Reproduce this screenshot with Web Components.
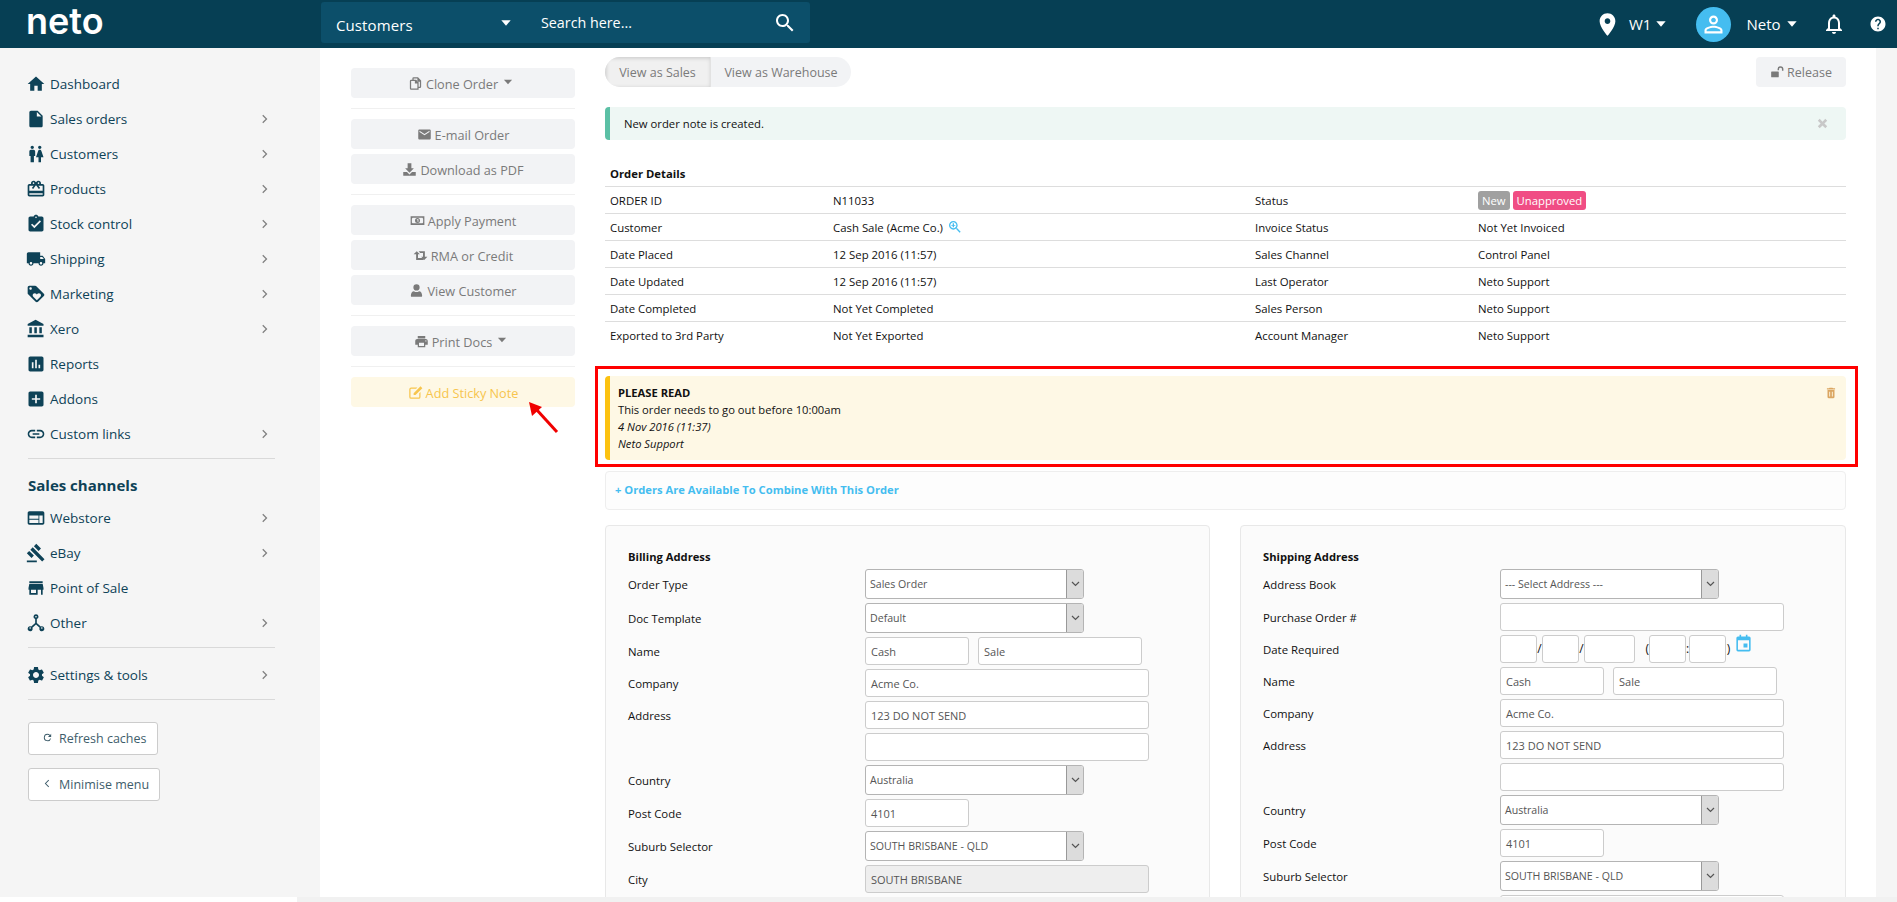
<!DOCTYPE html>
<html lang="en">
<head>
<meta charset="utf-8">
<title>Order N11033</title>
<style>
  html, body { margin: 0; height: 100%; overflow: hidden; background: #f5f5f5; }
  body { font-family: "Open Sans", "Liberation Sans", sans-serif; font-size: 12px; color: #111; }
</style>
</head>
<body>
<neto-app>
  <neto-topbar slot="top"></neto-topbar>

  <neto-sidebar slot="side">
    <nav-item icon="home">Dashboard</nav-item>
    <nav-item icon="file" more>Sales orders</nav-item>
    <nav-item icon="wc" more>Customers</nav-item>
    <nav-item icon="gift" more>Products</nav-item>
    <nav-item icon="task" more>Stock control</nav-item>
    <nav-item icon="truck" more>Shipping</nav-item>
    <nav-item icon="tag" more>Marketing</nav-item>
    <nav-item icon="bank" more>Xero</nav-item>
    <nav-item icon="chart">Reports</nav-item>
    <nav-item icon="addbox">Addons</nav-item>
    <nav-item icon="link" more>Custom links</nav-item>
    <side-rule></side-rule>
    <side-heading>Sales channels</side-heading>
    <nav-item icon="web" more>Webstore</nav-item>
    <nav-item icon="gavel" more>eBay</nav-item>
    <nav-item icon="store">Point of Sale</nav-item>
    <nav-item icon="hub" more>Other</nav-item>
    <side-rule></side-rule>
    <nav-item icon="cog" more>Settings &amp; tools</nav-item>
    <side-rule></side-rule>
    <side-button icon="refresh">Refresh caches</side-button>
    <side-button icon="back">Minimise menu</side-button>
  </neto-sidebar>

  <order-page slot="main">
    <action-list slot="actions">
      <action-button icon="copy" caret>Clone Order</action-button>
      <action-rule></action-rule>
      <action-button icon="mail">E-mail Order</action-button>
      <action-button icon="download">Download as PDF</action-button>
      <action-rule></action-rule>
      <action-button icon="money">Apply Payment</action-button>
      <action-button icon="swap">RMA or Credit</action-button>
      <action-button icon="person">View Customer</action-button>
      <action-rule></action-rule>
      <action-button icon="print" caret>Print Docs</action-button>
      <action-rule></action-rule>
      <action-button icon="edit" tone="sticky">Add Sticky Note</action-button>
    </action-list>

    <view-bar></view-bar>
    <success-alert>New order note is created.</success-alert>

    <order-details>
      <detail-row a="ORDER ID" b="N11033" c="Status">
        <status-badge>New</status-badge><status-badge tone="pink">Unapproved</status-badge>
      </detail-row>
      <detail-row a="Customer" b="Cash Sale (Acme Co.)" c="Invoice Status" lookup>Not Yet Invoiced</detail-row>
      <detail-row a="Date Placed" b="12 Sep 2016 (11:57)" c="Sales Channel">Control Panel</detail-row>
      <detail-row a="Date Updated" b="12 Sep 2016 (11:57)" c="Last Operator">Neto Support</detail-row>
      <detail-row a="Date Completed" b="Not Yet Completed" c="Sales Person">Neto Support</detail-row>
      <detail-row a="Exported to 3rd Party" b="Not Yet Exported" c="Account Manager">Neto Support</detail-row>
    </order-details>

    <sticky-note title="PLEASE READ" date="4 Nov 2016 (11:37)" author="Neto Support">This order needs to go out before 10:00am</sticky-note>
    <combine-panel>+ Orders Are Available To Combine With This Order</combine-panel>

    <address-grid>
      <address-card title="Billing Address">
        <form-row label="Order Type"><select-box>Sales Order</select-box></form-row>
        <form-row label="Doc Template"><select-box>Default</select-box></form-row>
        <form-row label="Name"><text-box w="104">Cash</text-box><text-box w="164">Sale</text-box></form-row>
        <form-row label="Company"><text-box>Acme Co.</text-box></form-row>
        <form-row label="Address"><text-box>123 DO NOT SEND</text-box></form-row>
        <form-row><text-box></text-box></form-row>
        <form-row label="Country"><select-box>Australia</select-box></form-row>
        <form-row label="Post Code"><text-box w="104">4101</text-box></form-row>
        <form-row label="Suburb Selector"><select-box>SOUTH BRISBANE - QLD</select-box></form-row>
        <form-row label="City"><text-box disabled>SOUTH BRISBANE</text-box></form-row>
      </address-card>
      <address-card title="Shipping Address">
        <form-row label="Address Book"><select-box>--- Select Address ---</select-box></form-row>
        <form-row label="Purchase Order #"><text-box></text-box></form-row>
        <form-row label="Date Required"><date-field></date-field></form-row>
        <form-row label="Name"><text-box w="104">Cash</text-box><text-box w="164">Sale</text-box></form-row>
        <form-row label="Company"><text-box>Acme Co.</text-box></form-row>
        <form-row label="Address"><text-box>123 DO NOT SEND</text-box></form-row>
        <form-row><text-box></text-box></form-row>
        <form-row label="Country"><select-box>Australia</select-box></form-row>
        <form-row label="Post Code"><text-box w="104">4101</text-box></form-row>
        <form-row label="Suburb Selector"><select-box>SOUTH BRISBANE - QLD</select-box></form-row>
        <form-row><text-box></text-box></form-row>
      </address-card>
    </address-grid>
  </order-page>

  <scroll-strip slot="bottom"></scroll-strip>
</neto-app>

<script>
const ICONS = {
  home: "M10 20v-6h4v6h5v-8h3L12 3 2 12h3v8z",
  file: "M6 2c-1.1 0-1.99.9-1.99 2L4 20c0 1.1.89 2 1.99 2H18c1.1 0 2-.9 2-2V8l-6-6H6zm7 7V3.5L18.5 9H13z",
  wc: "M5.5 22v-7.5H4V9c0-1.1.9-2 2-2h3c1.1 0 2 .9 2 2v5.5H9.5V22h-4zM18 22v-6h3l-2.54-7.63C18.18 7.55 17.42 7 16.56 7h-.12c-.86 0-1.63.55-1.9 1.37L12 16h3v6h3zM7.5 6c1.11 0 2-.89 2-2s-.89-2-2-2-2 .89-2 2 .89 2 2 2zm9 0c1.11 0 2-.89 2-2s-.89-2-2-2-2 .89-2 2 .89 2 2 2z",
  gift: "M20 6h-2.18c.11-.31.18-.65.18-1 0-1.66-1.34-3-3-3-1.05 0-1.96.54-2.5 1.35l-.5.67-.5-.68C10.96 2.54 10.05 2 9 2 7.34 2 6 3.34 6 5c0 .35.07.69.18 1H4c-1.11 0-1.99.89-1.99 2L2 19c0 1.11.89 2 2 2h16c1.11 0 2-.89 2-2V8c0-1.11-.89-2-2-2zm-5-2c.55 0 1 .45 1 1s-.45 1-1 1-1-.45-1-1 .45-1 1-1zM9 4c.55 0 1 .45 1 1s-.45 1-1 1-1-.45-1-1 .45-1 1-1zm11 15H4v-2h16v2zm0-5H4V8h5.08L7 10.83 8.62 12 11 8.76l1-1.36 1 1.36L15.38 12 17 10.83 14.92 8H20v6z",
  task: "M19 3h-4.18C14.4 1.84 13.3 1 12 1c-1.3 0-2.4.84-2.82 2H5c-1.1 0-2 .9-2 2v14c0 1.1.9 2 2 2h14c1.1 0 2-.9 2-2V5c0-1.1-.9-2-2-2zm-7 0c.55 0 1 .45 1 1s-.45 1-1 1-1-.45-1-1 .45-1 1-1zm-2 14l-4-4 1.41-1.41L10 14.17l6.59-6.59L18 9l-8 8z",
  truck: "M20 8h-3V4H3c-1.1 0-2 .9-2 2v11h2c0 1.66 1.34 3 3 3s3-1.34 3-3h6c0 1.66 1.34 3 3 3s3-1.34 3-3h2v-5l-3-4zM6 18.5c-.83 0-1.5-.67-1.5-1.5s.67-1.5 1.5-1.5 1.5.67 1.5 1.5-.67 1.5-1.5 1.5zm13.5-9l1.96 2.5H17V9.5h2.5zm-1.5 9c-.83 0-1.5-.67-1.5-1.5s.67-1.5 1.5-1.5 1.5.67 1.5 1.5-.67 1.5-1.5 1.5z",
  tag: "M21.41 11.58l-9-9C12.05 2.22 11.55 2 11 2H4c-1.1 0-2 .9-2 2v7c0 .55.22 1.05.59 1.42l9 9c.36.36.86.58 1.41.58.55 0 1.05-.22 1.41-.59l7-7c.37-.36.59-.86.59-1.41 0-.55-.23-1.06-.59-1.42zM5.5 7C4.67 7 4 6.33 4 5.5S4.67 4 5.5 4 7 4.67 7 5.5 6.33 7 5.5 7zm11.77 8.27L13 19.54l-4.27-4.27C8.28 14.81 8 14.19 8 13.5c0-1.38 1.12-2.5 2.5-2.5.69 0 1.32.28 1.77.74l.73.72.73-.73c.45-.45 1.08-.73 1.77-.73 1.38 0 2.5 1.12 2.5 2.5 0 .69-.28 1.32-.73 1.77z",
  bank: "M4 10v7h3v-7H4zm6 0v7h3v-7h-3zM2 22h19v-3H2v3zm14-12v7h3v-7h-3zm-4.5-9L2 6v2h19V6l-9.5-5z",
  chart: "M19 3H5c-1.1 0-2 .9-2 2v14c0 1.1.9 2 2 2h14c1.1 0 2-.9 2-2V5c0-1.1-.9-2-2-2zM9 17H7v-7h2v7zm4 0h-2V7h2v10zm4 0h-2v-4h2v4z",
  addbox: "M19 3H5c-1.11 0-2 .9-2 2v14c0 1.1.89 2 2 2h14c1.1 0 2-.9 2-2V5c0-1.1-.9-2-2-2zm-2 10h-4v4h-2v-4H7v-2h4V7h2v4h4v2z",
  link: "M3.9 12c0-1.71 1.39-3.1 3.1-3.1h4V7H7c-2.76 0-5 2.24-5 5s2.24 5 5 5h4v-1.9H7c-1.71 0-3.1-1.39-3.1-3.1zM8 13h8v-2H8v2zm9-6h-4v1.9h4c1.71 0 3.1 1.39 3.1 3.1s-1.39 3.1-3.1 3.1h-4V17h4c2.76 0 5-2.24 5-5s-2.24-5-5-5z",
  web: "M20 4H4c-1.1 0-1.99.9-1.99 2L2 18c0 1.1.9 2 2 2h16c1.1 0 2-.9 2-2V6c0-1.1-.9-2-2-2zm-5 14H4v-4h11v4zm0-5H4V9h11v4zm5 5h-4V9h4v9z",
  gavel: "M1 21h12v2H1zM5.245 8.07l2.83-2.827 14.14 14.142-2.828 2.828zM12.317 1l5.657 5.656-2.83 2.83-5.654-5.66zM3.825 9.485l5.657 5.657-2.828 2.828-5.657-5.657z",
  store: "M20 4H4v2h16V4zm1 10v-2l-1-5H4l-1 5v2h1v6h10v-6h4v6h2v-6h1zm-9 4H6v-4h6v4z",
  hub: "M12 1.5a3 3 0 0 0-1 5.83V12l-4.700 4.300a3 3 0 1 0 1.400 1.400L12 13.800l4.300 3.900a3 3 0 1 0 1.400-1.400L13 12V7.330a3 3 0 0 0-1-5.830zm0 2a1 1 0 1 1 0 2 1 1 0 0 1 0-2zM5 17a1 1 0 1 1 0 2 1 1 0 0 1 0-2zm14 0a1 1 0 1 1 0 2 1 1 0 0 1 0-2z",
  cog: "M19.14 12.94c.04-.3.06-.61.06-.94 0-.32-.02-.64-.07-.94l2.03-1.58c.18-.14.23-.41.12-.61l-1.92-3.32c-.12-.22-.37-.29-.59-.22l-2.39.96c-.5-.38-1.03-.7-1.62-.94l-.36-2.54c-.04-.24-.24-.41-.48-.41h-3.84c-.24 0-.43.17-.47.41l-.36 2.54c-.59.24-1.13.57-1.62.94l-2.39-.96c-.22-.08-.47 0-.59.22L2.74 8.87c-.12.21-.08.47.12.61l2.03 1.58c-.05.3-.09.63-.09.94s.02.64.07.94l-2.03 1.58c-.18.14-.23.41-.12.61l1.92 3.32c.12.22.37.29.59.22l2.39-.96c.5.38 1.03.7 1.62.94l.36 2.54c.05.24.24.41.48.41h3.84c.24 0 .44-.17.47-.41l.36-2.54c.59-.24 1.13-.56 1.62-.94l2.39.96c.22.08.47 0 .59-.22l1.92-3.32c.12-.22.07-.47-.12-.61l-2.01-1.58zM12 15.6c-1.98 0-3.6-1.62-3.6-3.6s1.62-3.6 3.6-3.6 3.6 1.62 3.6 3.6-1.62 3.6-3.6 3.6z",
  chevron: "M8.6 5.4L10.4 3.6l8.4 8.4-8.4 8.4-1.8-1.8 6.6-6.6z",
  back: "M15.4 5.4L14 4l-8 8 8 8 1.4-1.4L8.8 12z",
  refresh: "M17.65 6.35A7.96 7.96 0 0 0 12 4a8 8 0 1 0 7.73 10h-2.08A6 6 0 1 1 12 6c1.66 0 3.14.69 4.22 1.78L13 11h7V4l-2.35 2.35z",
  caret: "M5 8h14l-7 8z",
  search: "M15.5 14h-.79l-.28-.27C15.41 12.59 16 11.11 16 9.5 16 5.91 13.09 3 9.5 3S3 5.91 3 9.5 5.91 16 9.5 16c1.61 0 3.09-.59 4.23-1.57l.27.28v.79l5 4.99L20.49 19l-4.99-5zm-6 0C7.01 14 5 11.99 5 9.5S7.01 5 9.5 5 14 7.01 14 9.5 11.99 14 9.5 14z",
  lookup: "M15.5 14h-.79l-.28-.27C15.41 12.59 16 11.11 16 9.5 16 5.91 13.09 3 9.5 3S3 5.91 3 9.5 5.91 16 9.5 16c1.61 0 3.09-.59 4.23-1.57l.27.28v.79l5 4.99L20.49 19l-4.99-5zm-6 0C7.01 14 5 11.99 5 9.5S7.01 5 9.5 5 14 7.01 14 9.5 11.99 14 9.5 14zm3-4h-2v2.5h-2V10h-2V9h2V6.5h2V9h2z",
  pin: "M12 2C8.13 2 5 5.13 5 9c0 5.25 7 13 7 13s7-7.75 7-13c0-3.87-3.13-7-7-7zm0 9.5c-1.38 0-2.5-1.12-2.5-2.5s1.12-2.5 2.5-2.5 2.5 1.12 2.5 2.5-1.12 2.5-2.5 2.5z",
  bell: "M12 22c1.1 0 2-.9 2-2h-4c0 1.1.9 2 2 2zm6-6v-5c0-3.07-1.63-5.64-4.5-6.32V4c0-.83-.67-1.5-1.5-1.5s-1.5.67-1.5 1.5v.68C7.64 5.36 6 7.92 6 11v5l-2 2v1h16v-1l-2-2zm-2 1H8v-6c0-2.48 1.51-4.5 4-4.5s4 2.02 4 4.5v6z",
  help: "M12 2C6.48 2 2 6.48 2 12s4.48 10 10 10 10-4.48 10-10S17.52 2 12 2zm1 17h-2v-2h2v2zm2.07-7.75l-.9.92C13.45 12.9 13 13.5 13 15h-2v-.5c0-1.1.45-2.1 1.17-2.83l1.24-1.26c.37-.36.59-.86.59-1.41 0-1.1-.9-2-2-2s-2 .9-2 2H8c0-2.21 1.79-4 4-4s4 1.79 4 4c0 .88-.36 1.68-.93 2.25z",
  avatar: "M12 5.9c1.16 0 2.1.94 2.1 2.1s-.94 2.1-2.1 2.1S9.9 9.16 9.9 8s.94-2.1 2.1-2.1m0 9c2.97 0 6.1 1.46 6.1 2.1v1.1H5.9V17c0-.64 3.13-2.1 6.1-2.1M12 4C9.79 4 8 5.79 8 8s1.79 4 4 4 4-1.79 4-4-1.79-4-4-4zm0 9c-2.67 0-8 1.34-8 4v3h16v-3c0-2.66-5.33-4-8-4z",
  copy: "M9 2h7l5 5v10a2 2 0 0 1-2 2h-2v3H5a2 2 0 0 1-2-2V8a2 2 0 0 1 2-2h2V4a2 2 0 0 1 2-2zm0 4h4l4 4v7h2V9h-4V4H9v2zM5 8v12h10v-8h-4V8H5z",
  mail: "M20 4H4c-1.1 0-1.99.9-1.99 2L2 18c0 1.1.9 2 2 2h16c1.1 0 2-.9 2-2V6c0-1.1-.9-2-2-2zm0 4l-8 5-8-5V6l8 5 8-5v2z",
  download: "M2 16h6l4 4 4-4h6v6H2zM9 2h6v8h4l-7 7-7-7h4z",
  money: "M1 5h22v14H1zm3 2.5A3.5 3.5 0 0 1 3 9v6a3.5 3.5 0 0 1 1 1.5h16a3.5 3.5 0 0 1 1-1.5V9a3.5 3.5 0 0 1-1-1.5zM12 8a4 4 0 1 1 0 8 4 4 0 0 1 0-8zm-1 2v1h1v3h1.5v-4z",
  swap: "M6 5l5 5H8v6h7l2.5 3H5V10H1zm3 0h10v9h4l-5 5-5-5h3V8H11.5z",
  person: "M12 2a5 5 0 1 1 0 10 5 5 0 0 1 0-10zM4 22c-1 0-1-1-1-2 0-4 2-7 5-7 1 1 2.4 1.5 4 1.5s3-.5 4-1.5c3 0 5 3 5 7 0 1 0 2-1 2z",
  print: "M19 8H5c-1.66 0-3 1.34-3 3v6h4v4h12v-4h4v-6c0-1.66-1.34-3-3-3zm-3 11H8v-5h8v5zm3-7c-.55 0-1-.45-1-1s.45-1 1-1 1 .45 1 1-.45 1-1 1zm-1-9H6v4h12V3z",
  edit: "M5 4h10l-2 2H5a1 1 0 0 0-1 1v12a1 1 0 0 0 1 1h12a1 1 0 0 0 1-1v-6l2-2v8a3 3 0 0 1-3 3H5a3 3 0 0 1-3-3V7a3 3 0 0 1 3-3zM20 2l3 3-11 11H9v-3z",
  unlock: "M3 11h11a1 1 0 0 1 1 1v8a1 1 0 0 1-1 1H3a1 1 0 0 1-1-1v-8a1 1 0 0 1 1-1zm10-2V7a5 5 0 0 1 10 0v3h-2.5V7a2.5 2.5 0 0 0-5 0v2z",
  close: "M19.5 7.5l-3-3L12 9 7.5 4.5l-3 3L9 12l-4.5 4.5 3 3L12 15l4.5 4.5 3-3L15 12z",
  trash: "M6 19c0 1.1.9 2 2 2h8c1.1 0 2-.9 2-2V7H6v12zm3-9h1.5v8H9zm4.5 0H15v8h-1.5zM19 4h-3.5l-1-1h-5l-1 1H5v2h14V4z",
  calendar: "M7 1h2v2h6V1h2v2h2a2 2 0 0 1 2 2v15a2 2 0 0 1-2 2H5a2 2 0 0 1-2-2V5a2 2 0 0 1 2-2h2zM5 8v12h14V8zm7 4h5v5h-5z"
};

class NetoIcon extends HTMLElement {
  connectedCallback() {
    const size = this.getAttribute("size") || 20;
    const path = ICONS[this.getAttribute("name")];
    this.attachShadow({ mode: "open" }).innerHTML = `
      <style>
        :host { display: inline-flex; flex: none; width: ${size}px; height: ${size}px; }
        svg { width: 100%; height: 100%; fill: currentColor; display: block; }
      </style>
      <svg viewBox="0 0 24 24"><path fill-rule="evenodd" d="${path}"/></svg>`;
  }
}

const appTemplate = document.createElement("template");
appTemplate.innerHTML = `
  <style>
    :host {
      display: grid;
      height: 902px;
      grid-template-columns: 320px 1556px 21px;
      grid-template-rows: 48px 849px 5px;
      grid-template-areas: "top top top" "side main ." "bottom bottom bottom";
    }
    ::slotted([slot=top]) { grid-area: top; }
    ::slotted([slot=side]) { grid-area: side; }
    ::slotted([slot=main]) { grid-area: main; }
    ::slotted([slot=bottom]) { grid-area: bottom; }
  </style>
  <slot name="top"></slot>
  <slot name="side"></slot>
  <slot name="main"></slot>
  <slot name="bottom"></slot>
`;
class NetoApp extends HTMLElement {
  connectedCallback() {
    this.attachShadow({ mode: "open" }).append(appTemplate.content.cloneNode(true));
  }
}

const topbarTemplate = document.createElement("template");
topbarTemplate.innerHTML = `
  <style>
    :host { display: flex; align-items: center; background: #063f54; color: #fff; font-size: 15px; height: 48px; }
    .logo { align-self: flex-start; width: 321px; box-sizing: border-box; padding-left: 26px; font-family: Inter, "Open Sans", sans-serif; font-size: 36px; font-weight: 600; line-height: 42px; }
    .search { display: flex; align-items: center; width: 489px; height: 41px; margin-top: -3px; background: #0c4f6a; border-radius: 3px; }
    .scope { width: 220px; box-sizing: border-box; padding: 4px 27px 0 15px; display: flex; align-items: center; justify-content: space-between; letter-spacing: .1px; }
    .scope neto-icon { margin-top: -4px; }
    .query { flex: 1; font-size: 14.3px; }
    .search > neto-icon { margin-right: 13px; }
    .right { flex: 1; display: flex; align-items: center; }
    .site { margin-left: 784px; display: flex; align-items: center; }
    .loc { margin-left: 8px; }
    .who { width: 35px; height: 35px; border-radius: 50%; background: #45bdf0; display: flex; align-items: center; justify-content: center; margin-left: 27px; }
    .name { margin-left: 15px; }
    .bell { margin-left: 22px; }
    .help { margin-left: 23px; }
  </style>
  <div class="logo">neto</div>
  <div class="search">
    <div class="scope">Customers <neto-icon name="caret" size="16"></neto-icon></div>
    <div class="query">Search here...</div>
    <neto-icon name="search" size="24"></neto-icon>
  </div>
  <div class="right">
    <div class="site"><neto-icon name="pin" size="27"></neto-icon><span class="loc">W1</span></div>
    <neto-icon name="caret" size="16" style="margin-left:2px"></neto-icon>
    <div class="who"><neto-icon name="avatar" size="27"></neto-icon></div>
    <span class="name">Neto</span>
    <neto-icon name="caret" size="16" style="margin-left:3px"></neto-icon>
    <neto-icon class="bell" name="bell" size="24"></neto-icon>
    <neto-icon class="help" name="help" size="18"></neto-icon>
  </div>
`;
class NetoTopbar extends HTMLElement {
  connectedCallback() {
    this.attachShadow({ mode: "open" }).append(topbarTemplate.content.cloneNode(true));
  }
}

const sidebarTemplate = document.createElement("template");
sidebarTemplate.innerHTML = `
  <style>
    :host { display: block; background: #f5f5f5; padding-top: 18px; color: #0e4257; overflow: hidden; }
  </style>
  <slot></slot>
`;
class NetoSidebar extends HTMLElement {
  connectedCallback() {
    this.attachShadow({ mode: "open" }).append(sidebarTemplate.content.cloneNode(true));
  }
}

class NavItem extends HTMLElement {
  connectedCallback() {
    const more = this.hasAttribute("more");
    this.attachShadow({ mode: "open" }).innerHTML = `
      <style>
        :host { display: flex; align-items: center; height: 35px; padding-left: 26px; width: 244px; font-size: 13.5px; color: #0e4257; }
        .label { flex: 1; margin-left: 4px; }
        .arrow { color: #808080; }
      </style>
      <neto-icon name="${this.getAttribute("icon")}" size="20"></neto-icon>
      <span class="label"><slot></slot></span>
      ${more ? '<neto-icon class="arrow" name="chevron" size="12"></neto-icon>' : ""}`;
  }
}

class SideRule extends HTMLElement {
  connectedCallback() {
    this.attachShadow({ mode: "open" }).innerHTML = `
      <style>:host { display: block; width: 247px; margin: 7px 0 9px 28px; height: 1px; background: #d9d9d9; }</style>`;
  }
}

class SideHeading extends HTMLElement {
  connectedCallback() {
    this.attachShadow({ mode: "open" }).innerHTML = `
      <style>:host { display: block; margin: 16px 0 5px 28px; height: 20px; line-height: 20px; font-size: 15px; font-weight: 700; color: #0e4257; }</style>
      <slot></slot>`;
  }
}

class SideButton extends HTMLElement {
  connectedCallback() {
    this.attachShadow({ mode: "open" }).innerHTML = `
      <style>
        :host { display: flex; width: max-content; align-items: center; box-sizing: border-box; height: 33px; margin: 13px 0 0 28px; padding: 0 10px 0 13px; background: #fff; border: 1px solid #ccc; border-radius: 3px; font-size: 12.5px; color: #3e5d6b; }
        :host(:nth-last-child(2)) { margin-top: 22px; }
        neto-icon { margin-right: 6px; margin-top: -3px; }
      </style>
      <neto-icon name="${this.getAttribute("icon")}" size="11"></neto-icon><slot></slot>`;
  }
}

const pageTemplate = document.createElement("template");
pageTemplate.innerHTML = `
  <style>
    :host { display: grid; grid-template-columns: 224px 1fr; column-gap: 30px; background: #fff; padding: 9px 30px 0 31px; overflow: hidden; align-content: start; }
    .content { min-width: 0; }
    ::slotted([slot=actions]) { margin-top: 11px; }
  </style>
  <slot name="actions"></slot>
  <div class="content"><slot></slot></div>
`;
class OrderPage extends HTMLElement {
  connectedCallback() {
    this.attachShadow({ mode: "open" }).append(pageTemplate.content.cloneNode(true));
  }
}

class ActionList extends HTMLElement {
  connectedCallback() {
    this.attachShadow({ mode: "open" }).innerHTML = `
      <style>:host { display: block; position: relative; }
        .arrow { position: absolute; left: 176px; top: 334px; width: 32px; height: 32px; }
      </style>
      <slot></slot>
      <svg class="arrow" viewBox="0 0 32 32">
        <path d="M30 30 L9 7" stroke="#f00000" stroke-width="3" fill="none"/>
        <path d="M2 0 L15 5 L5 14 Z" fill="#f00000"/>
      </svg>`;
  }
}

class ActionButton extends HTMLElement {
  connectedCallback() {
    const sticky = this.getAttribute("tone") === "sticky";
    this.attachShadow({ mode: "open" }).innerHTML = `
      <style>
        :host { display: flex; align-items: center; justify-content: center; box-sizing: border-box; height: 30px; padding-top: 1px; margin-bottom: 5px; border-radius: 4px; font-size: 12.7px;
          background: ${sticky ? "#fef8e5" : "#f2f3f5"}; color: ${sticky ? "#f7c54d" : "#7a7a7a"}; }
        neto-icon { margin-right: 3px; }
        .c { margin-left: 3px; margin-top: -3px; }
      </style>
      <neto-icon name="${this.getAttribute("icon")}" size="15"></neto-icon><slot></slot>
      ${this.hasAttribute("caret") ? '<neto-icon class="c" name="caret" size="14"></neto-icon>' : ""}`;
  }
}

class ActionRule extends HTMLElement {
  connectedCallback() {
    this.attachShadow({ mode: "open" }).innerHTML = `
      <style>:host { display: block; height: 1px; background: #f0f0f0; margin: 10px 0 10px; }</style>`;
  }
}

class ViewBar extends HTMLElement {
  connectedCallback() {
    this.attachShadow({ mode: "open" }).innerHTML = `
      <style>
        :host { display: flex; justify-content: space-between; height: 30px; font-size: 12.5px; color: #7a7a7a; }
        .toggle { display: flex; background: #f2f3f5; border-radius: 15px; overflow: hidden; width: 246px; }
        .seg { display: flex; align-items: center; justify-content: center; }
        .on { width: 105px; background: #f0f0f0; box-shadow: inset 1px 1px 4px rgba(0,0,0,.18); border-right: 1px solid #e2e2e2; }
        .off { flex: 1; }
        .release { display: flex; align-items: center; justify-content: center; width: 90px; background: #f2f3f5; border-radius: 4px; gap: 3px; }
      </style>
      <div class="toggle"><div class="seg on">View as Sales</div><div class="seg off">View as Warehouse</div></div>
      <div class="release"><neto-icon name="unlock" size="14"></neto-icon>Release</div>`;
  }
}

class SuccessAlert extends HTMLElement {
  connectedCallback() {
    this.attachShadow({ mode: "open" }).innerHTML = `
      <style>
        :host { display: flex; align-items: center; justify-content: space-between; box-sizing: border-box; height: 33px; margin-top: 20px; padding: 0 16px 0 14px; background: #eef7f4; border-left: 5px solid #5bc0a5; border-radius: 4px; font-size: 11.3px; color: #111; }
        neto-icon { color: #c8c8c8; }
      </style>
      <span><slot></slot></span><neto-icon name="close" size="15"></neto-icon>`;
  }
}

class OrderDetails extends HTMLElement {
  connectedCallback() {
    this.attachShadow({ mode: "open" }).innerHTML = `
      <style>
        :host { display: block; margin-top: 25px; font-size: 11.4px; color: #111; }
        h3 { margin: 0; padding-left: 5px; height: 21px; line-height: 18px; font-size: 11.3px; font-weight: 700; border-bottom: 1px solid #ddd; }
      </style>
      <h3>Order Details</h3>
      <slot></slot>`;
  }
}

class DetailRow extends HTMLElement {
  connectedCallback() {
    const lookup = this.hasAttribute("lookup");
    this.attachShadow({ mode: "open" }).innerHTML = `
      <style>
        :host { display: grid; grid-template-columns: 223px 422px 223px 1fr; height: 27px; box-sizing: border-box; align-items: center; border-bottom: 1px solid #ddd; padding-left: 5px; }
        :host(:last-child) { border-bottom: 0; }
        .d { display: flex; align-items: center; gap: 3px; }
        .d neto-icon { color: #45bdf0; margin-left: 1px; }
      </style>
      <span>${this.getAttribute("a")}</span>
      <span class="d">${this.getAttribute("b")}${lookup ? '<neto-icon name="lookup" size="16"></neto-icon>' : ""}</span>
      <span>${this.getAttribute("c")}</span>
      <span class="d"><slot></slot></span>`;
  }
}

class StatusBadge extends HTMLElement {
  connectedCallback() {
    const pink = this.getAttribute("tone") === "pink";
    this.attachShadow({ mode: "open" }).innerHTML = `
      <style>
        :host { display: inline-block; height: 19px; line-height: 19px; padding: 0 4px; border-radius: 3px; font-size: 11.3px; color: #fff; background: ${pink ? "#f04d84" : "#a0a0a0"}; }
      </style>
      <slot></slot>`;
  }
}

class StickyNote extends HTMLElement {
  connectedCallback() {
    this.attachShadow({ mode: "open" }).innerHTML = `
      <style>
        :host { display: block; position: relative; box-sizing: border-box; height: 84px; margin-top: 27px; padding: 8px 8px; background: #fef8e5; border-left: 5px solid #fcc211; border-radius: 4px; font-size: 11.2px; line-height: 17px; color: #111; }
        b { display: block; }
        i { display: block; }
        .box { position: absolute; left: -15px; right: -12px; top: -10px; bottom: -7px; border: 3px solid #ff0000; }
        neto-icon { position: absolute; top: 10px; right: 8px; color: #dba662; }
      </style>
      <b>${this.getAttribute("title")}</b>
      <slot></slot>
      <i>${this.getAttribute("date")}</i>
      <i>${this.getAttribute("author")}</i>
      <neto-icon name="trash" size="14"></neto-icon>
      <div class="box"></div>`;
  }
}

class CombinePanel extends HTMLElement {
  connectedCallback() {
    this.attachShadow({ mode: "open" }).innerHTML = `
      <style>
        :host { display: flex; align-items: center; box-sizing: border-box; height: 39px; margin-top: 11px; padding: 0 0 3px 9px; background: #fdfdfd; border: 1px solid #eee; border-radius: 4px; font-size: 11.2px; font-weight: 700; color: #45bdf0; }
      </style>
      <slot></slot>`;
  }
}

class AddressGrid extends HTMLElement {
  connectedCallback() {
    this.attachShadow({ mode: "open" }).innerHTML = `
      <style>:host { display: grid; grid-template-columns: 605px 606px; column-gap: 30px; margin-top: 15px; }</style>
      <slot></slot>`;
  }
}

class AddressCard extends HTMLElement {
  connectedCallback() {
    this.attachShadow({ mode: "open" }).innerHTML = `
      <style>
        :host { display: block; background: #fbfbfb; border: 1px solid #e8e8e8; border-radius: 4px; padding: 22px 22px 20px; font-size: 11.4px; color: #111; }
        h4 { margin: 0 0 3px; font-size: 11.2px; line-height: 18px; font-weight: 700; }
      </style>
      <h4>${this.getAttribute("title")}</h4>
      <slot></slot>`;
  }
}

class FormRow extends HTMLElement {
  connectedCallback() {
    this.attachShadow({ mode: "open" }).innerHTML = `
      <style>
        :host { display: grid; grid-template-columns: 237px 1fr; align-items: center; margin-bottom: 4px; }
        .ctl { display: flex; gap: 9px; align-items: flex-start; }
      </style>
      <span>${this.getAttribute("label") || ""}</span>
      <div class="ctl"><slot></slot></div>`;
  }
}

class SelectBox extends HTMLElement {
  connectedCallback() {
    this.attachShadow({ mode: "open" }).innerHTML = `
      <style>
        :host { display: flex; box-sizing: border-box; width: 219px; height: 30px; background: #fff; border: 1px solid #b4b4b4; border-radius: 3px; overflow: hidden; font-size: 10.6px; color: #555; }
        .t { flex: 1; align-self: center; padding-left: 4px; margin-top: -1px; }
        .a { width: 16px; background: #dcdcdc; border-left: 1px solid #999; display: flex; align-items: center; justify-content: center; color: #555; }
        svg { width: 9px; height: 6px; fill: none; stroke: currentColor; stroke-width: 1.2; }
      </style>
      <span class="t"><slot></slot></span>
      <span class="a"><svg viewBox="0 0 9 6"><path d="M1 1l3.5 3.5L8 1"/></svg></span>`;
  }
}

class TextBox extends HTMLElement {
  connectedCallback() {
    const w = this.getAttribute("w");
    const off = this.hasAttribute("disabled");
    this.attachShadow({ mode: "open" }).innerHTML = `
      <style>
        :host { display: flex; align-items: center; box-sizing: border-box; ${w ? `width:${w}px;` : "width:284px;"} height: 28px; padding-left: 5px; border: 1px solid #ccc; border-radius: 3px; background: ${off ? "#eee" : "#fff"}; font-size: 11px; color: #555; }
      </style>
      <slot></slot>`;
  }
}

class DateField extends HTMLElement {
  connectedCallback() {
    this.attachShadow({ mode: "open" }).innerHTML = `
      <style>
        :host { display: flex; align-items: flex-start; height: 28px; font-size: 12px; color: #111; }
        .b { box-sizing: border-box; height: 28px; border: 1px solid #ccc; border-radius: 3px; background: #fff; }
        .s { width: 5px; text-align: center; line-height: 28px; }
        neto-icon { color: #45bdf0; margin: -1px 0 0 3px; }
      </style>
      <div class="b" style="width:37px"></div><span class="s">/</span>
      <div class="b" style="width:37px"></div><span class="s">/</span>
      <div class="b" style="width:51px"></div>
      <span class="s" style="width:14px;text-align:right">(</span>
      <div class="b" style="width:37px"></div><span class="s" style="width:3px">:</span>
      <div class="b" style="width:37px"></div><span class="s">)</span>
      <neto-icon name="calendar" size="19"></neto-icon>`;
  }
}

class ScrollStrip extends HTMLElement {
  connectedCallback() {
    this.attachShadow({ mode: "open" }).innerHTML = `
      <style>
        :host { display: block; background: #f1f1f1; }
        div { width: 297px; height: 100%; background: #fff; }
      </style>
      <div></div>`;
  }
}

customElements.define("neto-icon", NetoIcon);
customElements.define("neto-app", NetoApp);
customElements.define("neto-topbar", NetoTopbar);
customElements.define("neto-sidebar", NetoSidebar);
customElements.define("nav-item", NavItem);
customElements.define("side-rule", SideRule);
customElements.define("side-heading", SideHeading);
customElements.define("side-button", SideButton);
customElements.define("order-page", OrderPage);
customElements.define("action-list", ActionList);
customElements.define("action-button", ActionButton);
customElements.define("action-rule", ActionRule);
customElements.define("view-bar", ViewBar);
customElements.define("success-alert", SuccessAlert);
customElements.define("order-details", OrderDetails);
customElements.define("detail-row", DetailRow);
customElements.define("status-badge", StatusBadge);
customElements.define("sticky-note", StickyNote);
customElements.define("combine-panel", CombinePanel);
customElements.define("address-grid", AddressGrid);
customElements.define("address-card", AddressCard);
customElements.define("form-row", FormRow);
customElements.define("select-box", SelectBox);
customElements.define("text-box", TextBox);
customElements.define("date-field", DateField);
customElements.define("scroll-strip", ScrollStrip);
</script>
</body>
</html>
